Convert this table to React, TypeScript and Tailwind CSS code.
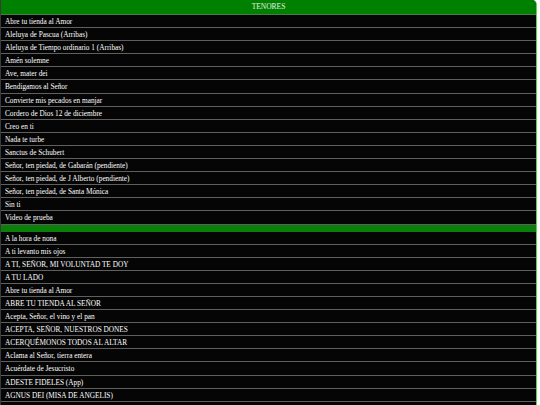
import React from 'react';

const TENORES = [
  'Abre tu tienda al Amor',
  'Aleluya de Pascua (Arribas)',
  'Aleluya de Tiempo ordinario 1 (Arribas)',
  'Amén solemne',
  'Ave, mater dei',
  'Bendigamos al Señor',
  'Convierte mis pecados en manjar',
  'Cordero de Dios 12 de diciembre',
  'Creo en ti',
  'Nada te turbe',
  'Sanctus de Schubert',
  'Señor, ten piedad, de Gabarán (pendiente)',
  'Señor, ten piedad, de J Alberto (pendiente)',
  'Señor, ten piedad, de Santa Mónica',
  'Sin ti',
  'Video de prueba',
];

const TODOS = [
  'A la hora de nona',
  'A ti levanto mis ojos',
  'A TI, SEÑOR, MI VOLUNTAD TE DOY',
  'A TU LADO',
  'Abre tu tienda al Amor',
  'ABRE TU TIENDA AL SEÑOR',
  'Acepta, Señor, el vino y el pan',
  'ACEPTA, SEÑOR, NUESTROS DONES',
  'ACERQUÉMONOS TODOS AL ALTAR',
  'Aclama al Señor, tierra entera',
  'Acuérdate de Jesucristo',
  'ADESTE FIDELES (App)',
  'AGNUS DEI (MISA DE ANGELIS)',
];

function Row({ title }: { title: string }) {
  return (
    <div className="h-[13.1px] border-b border-[#5f5f5f] bg-[#050505] pl-[4px] text-[7.3px] leading-[13px] text-white whitespace-nowrap overflow-hidden">
      {title}
    </div>
  );
}

export default function App() {
  return (
    <div className="min-h-[405px] bg-white" style={{ fontFamily: '"Liberation Serif", serif' }}>
      <div className="w-[537px] overflow-hidden rounded-tr-[5px] border-r border-l border-r-[#5fcf5f] border-l-[#3a3a3a] bg-[#050505]">
        {/* Header */}
        <div className="h-[15px] border-b border-[#4a7a4a] bg-[#008000] text-center text-[7.5px] leading-[14px] text-[#e6f2e6]">
          TENORES
        </div>
        {TENORES.map((t) => (
          <Row key={t} title={t} />
        ))}
        <div className="h-[7px] bg-[#0a800a]" />
        {TODOS.map((t, i) => (
          <Row key={t + i} title={t} />
        ))}
        <div className="h-[13.1px] bg-[#050505]" />
      </div>
    </div>
  );
}
